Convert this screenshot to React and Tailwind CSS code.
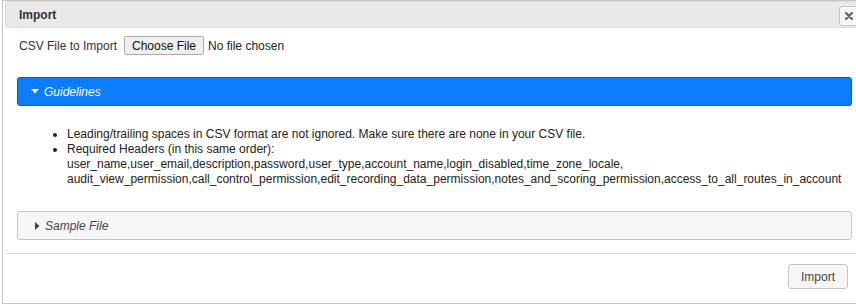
import React from "react";

function CaretDown() {
  return (
    <svg width="8" height="5" viewBox="0 0 8 5" className="shrink-0">
      <path d="M0 0 L8 0 L4 4.5 Z" fill="#ffffff" />
    </svg>
  );
}

function CaretRight() {
  return (
    <svg width="5" height="8" viewBox="0 0 5 8" className="shrink-0">
      <path d="M0 0 L4.5 4 L0 8 Z" fill="#444444" />
    </svg>
  );
}

export default function App() {
  return (
    <div className="relative w-[856px] h-[306px] overflow-hidden bg-white font-['Liberation_Sans',Arial,sans-serif] text-[12px] text-[#333333]">
      <div className="ml-[2px] w-[870px] h-[304px] border border-[#c5c5c5] px-[2px] flex flex-col">
        <div className="h-[27px] border border-[#dddddd] bg-[#e9e9e9] rounded-[3px] flex items-center pl-[13px] font-bold text-[12px] text-[#333333]">
          Import
        </div>

        <div className="mt-[8px] h-[19px] flex items-center pl-[14px]">
          <span>CSV File to Import</span>
          <button className="ml-[7px] w-[80px] h-[19px] border border-[#a9a9a9] rounded-[2px] bg-[#efefef] text-[12px] text-[#111111] flex items-center justify-center leading-none">
            Choose File
          </button>
          <span className="ml-[4px] text-[#222222]">No file chosen</span>
        </div>

        <div className="mt-[22px] ml-[12px] w-[835px] h-[29px] bg-[#0b7dfc] border border-[#0a56d6] rounded-[3px] flex items-center pl-[13px] text-white italic">
          <CaretDown />
          <span className="ml-[5px]">Guidelines</span>
        </div>

        <ul className="mt-[21px] ml-[62px] list-disc leading-[15px] text-[#222222]">
          <li>Leading/trailing spaces in CSV format are not ignored. Make sure there are none in your CSV file.</li>
          <li className="whitespace-nowrap">
            Required Headers (in this same order):
            <br />
            user_name,user_email,description,password,user_type,account_name,login_disabled,time_zone_locale,
            <br />
            audit_view_permission,call_control_permission,edit_recording_data_permission,notes_and_scoring_permission,access_to_all_routes_in_account
          </li>
        </ul>

        <div className="mt-[24px] ml-[12px] w-[835px] h-[29px] bg-[#f6f6f6] border border-[#c5c5c5] rounded-[3px] flex items-center pl-[17px] italic text-[#454545]">
          <CaretRight />
          <span className="ml-[5px]">Sample File</span>
        </div>

        <div className="mt-[13px] border-t border-[#dddddd] flex justify-end pr-[21px] pt-[10px]">
          <button className="w-[60px] h-[25px] border border-[#c5c5c5] rounded-[3px] bg-[#f6f6f6] text-[12px] text-[#454545] flex items-center justify-center">
            Import
          </button>
        </div>
      </div>

      <button className="absolute left-[839px] top-[6px] w-[20px] h-[20px] border border-[#c5c5c5] rounded-[3px] bg-[#f6f6f6] flex items-center justify-center">
        <svg width="8" height="8" viewBox="0 0 8 8">
          <path d="M1 1 L7 7 M7 1 L1 7" stroke="#666666" strokeWidth="2.2" strokeLinecap="round" />
        </svg>
      </button>
    </div>
  );
}
